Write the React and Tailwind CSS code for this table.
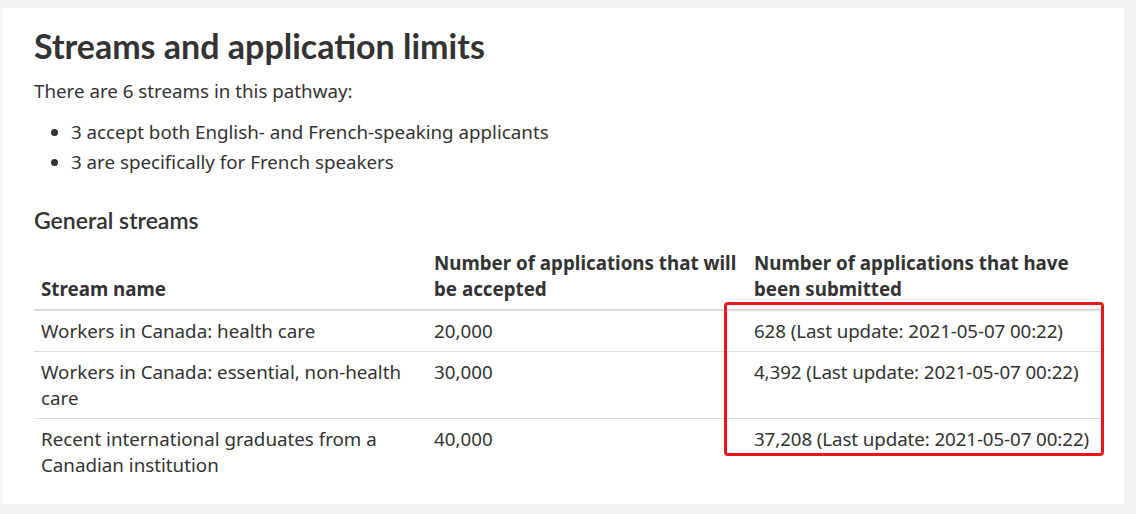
import React from 'react';

const rows = [
  { name: 'Workers in Canada: health care', cap: '20,000', sub: '628 (Last update: 2021-05-07 00:22)' },
  { name: 'Workers in Canada: essential, non-health care', cap: '30,000', sub: '4,392 (Last update: 2021-05-07 00:22)' },
  { name: 'Recent international graduates from a Canadian institution', cap: '40,000', sub: '37,208 (Last update: 2021-05-07 00:22)' },
];

const App = () => {
  return (
    <div className="min-h-screen bg-[#f3f3f3] pt-2 pl-[3px] pr-3 pb-[10px]">
      <div className="relative bg-white h-[496px] pl-[31px] pr-5 pt-4 text-[#333] font-['Noto_Sans',sans-serif]">
        <h2 className="font-['Lato',sans-serif] font-bold text-[34px] leading-[44px]">
          Streams and application limits
        </h2>
        <p className="mt-2 text-[18.75px] leading-[30px]">There are 6 streams in this pathway:</p>
        <ul className="mt-[11px] list-disc pl-[37px] text-[18.75px] leading-[30px]">
          <li>3 accept both English- and French-speaking applicants</li>
          <li>3 are specifically for French speakers</li>
        </ul>
        <h3 className="mt-[28px] font-['Lato',sans-serif] font-semibold text-[23px] leading-[30px]">
          General streams
        </h3>
        <table className="mt-[7px] w-[1070px] text-[18.75px] leading-[26px] border-collapse">
          <thead>
            <tr className="border-b-2 border-[#ddd]">
              <th className="w-[393px] text-left align-bottom font-bold px-[7px] pt-2 pb-[7px]">Stream name</th>
              <th className="w-[320px] text-left align-bottom font-bold px-[7px] pt-2 pb-[7px]">
                Number of applications that will be accepted
              </th>
              <th className="text-left align-bottom font-bold px-[7px] pt-2 pb-[7px]">
                Number of applications that have been submitted
              </th>
            </tr>
          </thead>
          <tbody>
            {rows.map((r, i) => (
              <tr key={i} className={i < rows.length - 1 ? 'border-b border-[#ddd]' : ''}>
                <td className="align-top px-[7px] py-[7px]">{r.name}</td>
                <td className="align-top px-[7px] py-[7px]">{r.cap}</td>
                <td className="align-top px-[7px] py-[7px] tracking-[-0.1px]">{r.sub}</td>
              </tr>
            ))}
          </tbody>
        </table>
        <div className="absolute left-[721px] top-[294px] w-[380px] h-[154px] border-[3px] border-[#e8161b] rounded-[4px] pointer-events-none" />
      </div>
    </div>
  );
};

export default App;
